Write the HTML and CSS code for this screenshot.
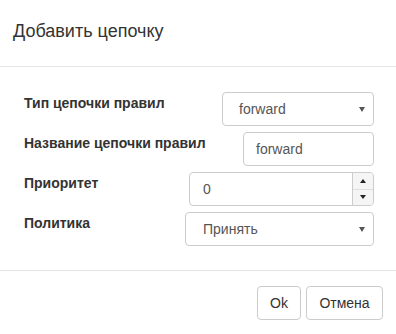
FILE: index.html
```html
<!DOCTYPE html>
<html lang="ru">
<head>
<meta charset="utf-8">
<link rel="stylesheet" href="styles.css">
</head>
<body>
<div class="modal">
  <div class="modal-header">
    <h4 class="modal-title">Добавить цепочку</h4>
  </div>
  <div class="modal-body">
    <div class="row">
      <label class="lbl">Тип цепочки правил</label>
      <div class="ctl select w-type"><span class="val">forward</span><span class="caret"></span></div>
    </div>
    <div class="row">
      <label class="lbl">Название цепочки правил</label>
      <div class="ctl input w-name"><span class="val">forward</span></div>
    </div>
    <div class="row">
      <label class="lbl">Приоритет</label>
      <div class="ctl number w-prio"><span class="val">0</span>
        <div class="spin">
          <div class="spin-btn"><span class="tri-up"></span></div>
          <div class="spin-btn"><span class="tri-down"></span></div>
        </div>
      </div>
    </div>
    <div class="row">
      <label class="lbl">Политика</label>
      <div class="ctl select w-pol"><span class="val">Принять</span><span class="caret"></span></div>
    </div>
  </div>
  <div class="modal-footer">
    <button class="btn btn-ok">Ok</button>
    <button class="btn btn-cancel">Отмена</button>
  </div>
</div>
</body>
</html>
```
FILE: styles.css
```css
html, body {
  margin: 0;
  padding: 0;
  background: #fff;
}
body {
  font-family: "Liberation Sans", Arial, sans-serif;
  color: #333;
  font-size: 14px;
}
.modal {
  width: 396px;
  height: 334px;
}
.modal-header {
  padding: 18px 13px 22px;
  border-bottom: 1px solid #e5e5e5;
}
.modal-title {
  margin: 0;
  font-size: 18px;
  font-weight: normal;
  line-height: 26px;
}
.modal-body {
  padding: 25px 22px 24px 24px;
  display: flex;
  flex-direction: column;
  gap: 6px;
}
.row {
  display: flex;
  justify-content: space-between;
  align-items: flex-start;
}
.lbl {
  font-size: 14px;
  font-weight: bold;
  line-height: 20px;
  padding-top: 1px;
  white-space: nowrap;
}
.ctl {
  box-sizing: border-box;
  height: 34px;
  border: 1px solid #ccc;
  border-radius: 4px;
  display: flex;
  align-items: center;
  color: #555;
  font-size: 14px;
  position: relative;
}
.w-type { width: 152px; padding-left: 16px; }
.w-name { width: 131px; padding-left: 12px; }
.w-prio { width: 185px; padding-left: 13px; }
.w-pol { width: 189px; padding-left: 17px; }
.val { flex: 1; }
.caret {
  width: 0;
  height: 0;
  border-left: 3px solid transparent;
  border-right: 3px solid transparent;
  border-top: 5px solid #555;
  margin-right: 8px;
  margin-top: 1px;
}
.spin {
  align-self: stretch;
  width: 20px;
  border-left: 1px solid #ccc;
  display: flex;
  flex-direction: column;
  background: #f5f5f5;
  border-radius: 0 3px 3px 0;
}
.spin-btn {
  flex: 1;
  display: flex;
  align-items: center;
  justify-content: center;
}
.spin-btn + .spin-btn {
  border-top: 1px solid #e0e0e0;
}
.tri-up {
  width: 0; height: 0;
  border-left: 3.5px solid transparent;
  border-right: 3.5px solid transparent;
  border-bottom: 4px solid #222;
}
.tri-down {
  width: 0; height: 0;
  border-left: 3.5px solid transparent;
  border-right: 3.5px solid transparent;
  border-top: 4px solid #222;
}
.modal-footer {
  border-top: 1px solid #e5e5e5;
  padding: 15px 13px 0;
  display: flex;
  justify-content: flex-end;
  gap: 5px;
}
.btn {
  box-sizing: border-box;
  height: 34px;
  border: 1px solid #ccc;
  border-radius: 4px;
  background: #fff;
  color: #333;
  font-family: "Liberation Sans", Arial, sans-serif;
  font-size: 14px;
  padding: 0;
  margin: 0;
}
.btn-ok { width: 44px; }
.btn-cancel { width: 77px; }
```
